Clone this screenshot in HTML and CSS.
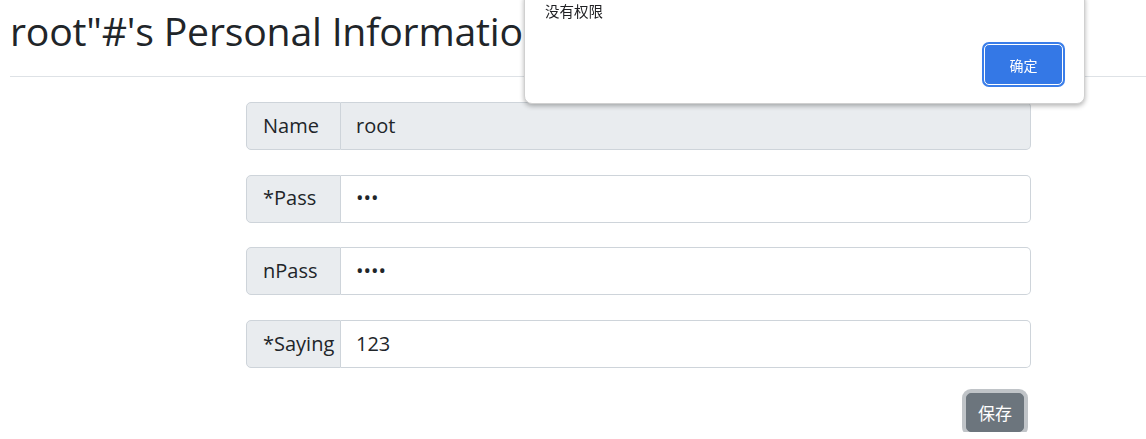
FILE: index.html
```html
<!DOCTYPE html>
<html lang="en">
<head>
  <meta charset="UTF-8" />
  <meta name="viewport" content="width=device-width, initial-scale=1.0"/>
  <title>Personal Information</title>
  <link rel="stylesheet" href="styles.css">
</head>
<body>

  <div class="page">
    <h1>root"#'s Personal Information</h1>
    <hr>

    <form class="info-form" onsubmit="return false;">
      <div class="input-group">
        <span class="input-group-text">Name</span>
        <input type="text" class="form-control" value="root" readonly>
      </div>
      <div class="input-group">
        <span class="input-group-text">*Pass</span>
        <input type="password" class="form-control" value="abc">
      </div>
      <div class="input-group">
        <span class="input-group-text">nPass</span>
        <input type="password" class="form-control" value="abcd">
      </div>
      <div class="input-group">
        <span class="input-group-text">*Saying</span>
        <input type="text" class="form-control" value="123">
      </div>
      <div class="form-actions">
        <button type="submit" class="btn btn-secondary focused">保存</button>
      </div>
    </form>
  </div>

  <div class="alert-dialog">
    <p class="alert-msg">没有权限</p>
    <div class="alert-actions">
      <button class="alert-ok">确定</button>
    </div>
  </div>

</body>
</html>
```

FILE: styles.css
```css
* {
  box-sizing: border-box;
}

body {
  margin: 0;
  background: #fff;
  color: #212529;
  font-family: 'Open Sans', 'Noto Sans CJK SC', sans-serif;
  overflow: hidden;
}

.page {
  padding: 0 0 0 10px;
}

h1 {
  margin: 7px 0 0;
  font-size: 39.2px;
  font-weight: 400;
  line-height: 1.2;
  letter-spacing: -0.2px;
  white-space: nowrap;
}

hr {
  margin: 22px 0 0;
  border: 0;
  border-top: 1px solid #dee2e6;
}

.info-form {
  margin: 25px 0 0 236px;
  width: 785px;
  display: flex;
  flex-direction: column;
  gap: 24.67px;
}

.input-group {
  display: flex;
  height: 48px;
}

.input-group-text {
  width: 95px;
  display: flex;
  align-items: center;
  padding: 0 0 2px 16px;
  font-size: 20px;
  background: #e9ecef;
  border: 1px solid #ced4da;
  border-radius: 5px 0 0 5px;
  white-space: nowrap;
}

.form-control {
  flex: 1;
  min-width: 0;
  padding: 0 15px 2px;
  font-family: inherit;
  font-size: 20px;
  color: #212529;
  background: #fff;
  border: 1px solid #ced4da;
  border-left: 0;
  border-radius: 0 5px 5px 0;
  outline: none;
}

.form-control[readonly] {
  background: #e9ecef;
}

.form-actions {
  display: flex;
  justify-content: flex-end;
  padding-right: 7px;
}

.btn {
  height: 39px;
  padding: 0 11px;
  font-family: 'Noto Sans CJK SC', sans-serif;
  font-size: 17px;
  border-radius: 5px;
  border: 1px solid transparent;
  cursor: pointer;
}

.btn-secondary {
  background: #6c757d;
  border-color: #6c757d;
  color: #fff;
}

.btn-secondary.focused {
  box-shadow: 0 0 0 4px rgba(130, 138, 145, 0.5);
}

.alert-dialog {
  position: fixed;
  top: -8px;
  left: 524px;
  width: 561px;
  height: 112px;
  background: #fff;
  border: 1px solid #d0d0d0;
  border-radius: 8px;
  box-shadow: 0 2px 5px rgba(0, 0, 0, 0.3);
  padding: 8px 20px 0 20px;
  font-family: 'Noto Sans CJK SC', sans-serif;
}

.alert-msg {
  margin: 1px 0 0 0;
  font-size: 14.5px;
  line-height: 18px;
  color: #202124;
}

.alert-actions {
  display: flex;
  justify-content: flex-end;
  margin-top: 24px;
  padding-right: 1px;
}

.alert-ok {
  width: 79px;
  height: 41px;
  background: #3478e6;
  color: #fff;
  font-family: inherit;
  font-size: 14px;
  border: 1px solid #fff;
  border-radius: 5px;
  box-shadow: 0 0 0 2px #3b7ee9;
  cursor: pointer;
}
```
